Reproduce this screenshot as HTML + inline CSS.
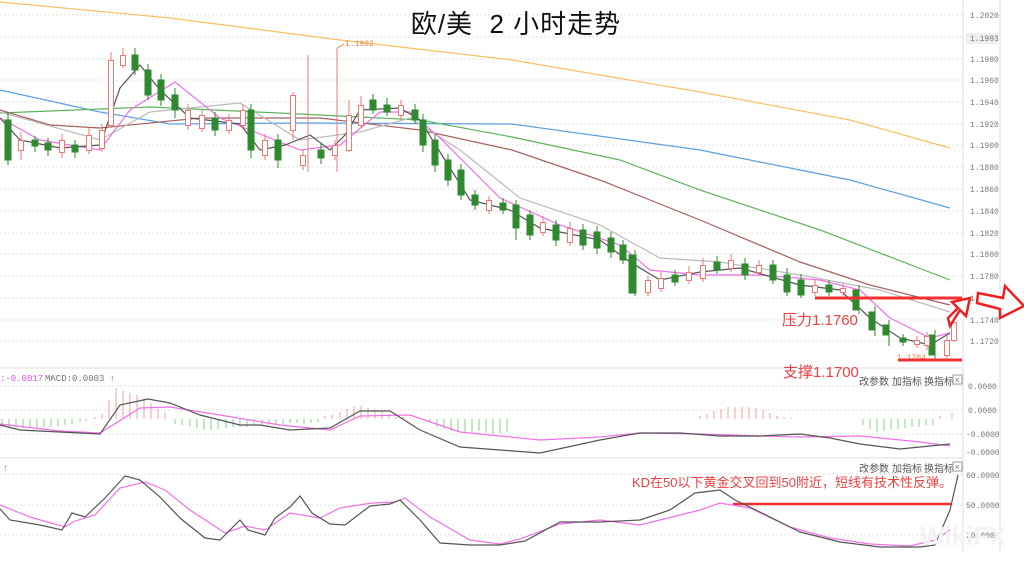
<!DOCTYPE html>
<html><head><meta charset="utf-8"><style>
html,body{margin:0;padding:0;background:#fff;}
body{width:1024px;height:566px;overflow:hidden;position:relative;font-family:"Liberation Sans","Noto Sans CJK SC",sans-serif;}
svg{position:absolute;left:0;top:0}
.ax{font-family:"Liberation Mono",monospace;font-size:8px;fill:#777}
.btn{font-family:"Liberation Sans","Noto Sans CJK SC",sans-serif;font-size:10px;fill:#555}
.g{fill:#2f8a2f;stroke:#2f8a2f;stroke-width:1}
.r{fill:#fff;stroke:#e77;stroke-width:1}
</style></head><body>
<svg width="1024" height="566" viewBox="0 0 1024 566">
<g stroke="#e2e2e2" stroke-dasharray="2,2" stroke-width="1">
<line x1="0" y1="15" x2="962" y2="15"/><line x1="0" y1="37" x2="962" y2="37"/><line x1="0" y1="59" x2="962" y2="59"/><line x1="0" y1="80" x2="962" y2="80"/><line x1="0" y1="102" x2="962" y2="102"/><line x1="0" y1="124" x2="962" y2="124"/><line x1="0" y1="145" x2="962" y2="145"/><line x1="0" y1="167" x2="962" y2="167"/><line x1="0" y1="189" x2="962" y2="189"/><line x1="0" y1="211" x2="962" y2="211"/><line x1="0" y1="233" x2="962" y2="233"/><line x1="0" y1="254" x2="962" y2="254"/><line x1="0" y1="276" x2="962" y2="276"/><line x1="0" y1="298" x2="962" y2="298"/><line x1="0" y1="320" x2="962" y2="320"/><line x1="0" y1="341" x2="962" y2="341"/>
<line x1="0" y1="386" x2="962" y2="386"/><line x1="0" y1="410" x2="962" y2="410"/><line x1="0" y1="434" x2="962" y2="434"/><line x1="0" y1="474" x2="962" y2="474"/><line x1="0" y1="505" x2="962" y2="505"/><line x1="0" y1="535" x2="962" y2="535"/>
</g>
<line x1="0" y1="368" x2="962" y2="368" stroke="#ddd"/>
<line x1="0" y1="458" x2="962" y2="458" stroke="#ddd"/>
<line x1="963" y1="0" x2="963" y2="552" stroke="#ddd"/>
<line x1="1000" y1="0" x2="1000" y2="552" stroke="#ddd"/>
<g class="ax">
<text x="970" y="18">1.2020</text>
<rect x="966" y="33" width="32" height="11" fill="#eee"/><text x="970" y="41">1.1993</text>
<text x="970" y="62">1.1980</text><text x="970" y="83">1.1960</text><text x="970" y="105">1.1940</text><text x="970" y="127">1.1920</text><text x="970" y="148">1.1900</text><text x="970" y="170">1.1880</text><text x="970" y="192">1.1860</text><text x="970" y="214">1.1840</text><text x="970" y="236">1.1820</text><text x="970" y="257">1.1800</text><text x="970" y="279">1.1780</text><text x="970" y="301">1.1760</text><text x="970" y="323">1.1740</text><text x="970" y="344">1.1720</text>
<text x="968" y="389">0.0000</text><text x="968" y="413">0.0000</text><text x="966" y="437">-0.0000</text><text x="966" y="455">-0.0000</text>
<text x="966" y="478">60.0000</text><text x="966" y="508">50.0000</text><text x="966" y="538">20.0000</text>
</g>
<g fill="none" stroke-width="1.2">
<polyline stroke="#f8c060" points="0,2 170,18 340,40 512,60 700,92 850,120 950,148"/>
<polyline stroke="#5aa0e0" points="0,90 100,112 170,124 300,123 512,124 700,150 850,180 950,208"/>
<polyline stroke="#5bb55b" points="0,113 150,107 300,114 420,120 512,137 620,160 700,190 820,230 950,280"/>
<polyline stroke="#a86060" points="0,110 50,125 100,128 200,118 320,118 420,130 512,150 600,180 700,220 800,262 870,285 950,305"/>
<polyline stroke="#bbb" points="0,112 100,140 150,112 240,103 300,140 360,132 410,118 460,150 520,198 600,225 660,258 720,262 800,275 880,290 950,312"/>
<polyline stroke="#f070e8" points="0,118 40,140 100,150 130,110 175,82 220,118 300,150 340,145 380,112 410,112 440,138 500,198 560,225 620,245 650,270 700,275 760,275 820,280 860,290 890,318 930,338 950,333"/>
<polyline stroke="#555" points="0,118 20,140 60,148 100,145 120,88 140,65 160,90 190,118 240,124 260,150 285,145 310,135 330,150 345,135 360,110 400,108 420,120 445,160 470,200 510,210 540,228 600,240 630,262 660,280 700,272 740,268 800,285 840,290 870,318 900,338 930,345 950,333"/>
</g>
<g stroke-width="1">
<g stroke="#2f8a2f">
<line x1="8" y1="112" x2="8" y2="165"/><line x1="35" y1="136" x2="35" y2="152"/><line x1="48" y1="138" x2="48" y2="156"/><line x1="75" y1="140" x2="75" y2="158"/><line x1="135" y1="48" x2="135" y2="75"/><line x1="148" y1="64" x2="148" y2="100"/><line x1="161" y1="74" x2="161" y2="106"/><line x1="175" y1="88" x2="175" y2="118"/><line x1="215" y1="112" x2="215" y2="136"/><line x1="251" y1="104" x2="251" y2="158"/><line x1="278" y1="134" x2="278" y2="168"/><line x1="321" y1="144" x2="321" y2="164"/><line x1="373" y1="94" x2="373" y2="114"/><line x1="387" y1="98" x2="387" y2="116"/><line x1="415" y1="104" x2="415" y2="124"/><line x1="423" y1="114" x2="423" y2="152"/><line x1="435" y1="134" x2="435" y2="172"/><line x1="448" y1="154" x2="448" y2="186"/><line x1="461" y1="164" x2="461" y2="200"/><line x1="475" y1="190" x2="475" y2="210"/><line x1="503" y1="198" x2="503" y2="214"/><line x1="516" y1="200" x2="516" y2="240"/><line x1="530" y1="210" x2="530" y2="240"/><line x1="556" y1="220" x2="556" y2="246"/><line x1="583" y1="224" x2="583" y2="250"/><line x1="597" y1="226" x2="597" y2="254"/><line x1="611" y1="232" x2="611" y2="258"/><line x1="623" y1="240" x2="623" y2="264"/><line x1="635" y1="250" x2="635" y2="296"/><line x1="675" y1="270" x2="675" y2="286"/><line x1="717" y1="256" x2="717" y2="274"/><line x1="745" y1="258" x2="745" y2="280"/><line x1="773" y1="260" x2="773" y2="284"/><line x1="787" y1="268" x2="787" y2="296"/><line x1="801" y1="274" x2="801" y2="298"/><line x1="829" y1="280" x2="829" y2="296"/><line x1="859" y1="285" x2="859" y2="314"/><line x1="875" y1="306" x2="875" y2="336"/><line x1="889" y1="320" x2="889" y2="346"/><line x1="903" y1="334" x2="903" y2="346"/><line x1="935" y1="330" x2="935" y2="360"/>
</g>
<g class="g">
<rect x="5" y="120" width="6" height="40"/><rect x="32" y="140" width="6" height="6"/><rect x="45" y="143" width="6" height="7"/><rect x="72" y="145" width="6" height="7"/><rect x="132" y="55" width="6" height="15"/><rect x="145" y="70" width="6" height="25"/><rect x="158" y="80" width="6" height="20"/><rect x="172" y="95" width="6" height="15"/><rect x="212" y="118" width="6" height="12"/><rect x="248" y="110" width="6" height="40"/><rect x="275" y="140" width="6" height="20"/><rect x="318" y="150" width="6" height="8"/><rect x="370" y="100" width="6" height="10"/><rect x="384" y="105" width="6" height="7"/><rect x="412" y="110" width="6" height="10"/><rect x="420" y="120" width="6" height="25"/><rect x="432" y="140" width="6" height="25"/><rect x="445" y="160" width="6" height="20"/><rect x="458" y="170" width="6" height="25"/><rect x="472" y="195" width="6" height="10"/><rect x="500" y="203" width="6" height="7"/><rect x="513" y="205" width="6" height="23"/><rect x="527" y="215" width="6" height="20"/><rect x="553" y="225" width="6" height="15"/><rect x="580" y="230" width="6" height="15"/><rect x="594" y="232" width="6" height="16"/><rect x="608" y="238" width="6" height="14"/><rect x="620" y="245" width="6" height="15"/><rect x="629" y="255" width="7" height="38"/><rect x="672" y="275" width="6" height="7"/><rect x="714" y="262" width="6" height="8"/><rect x="742" y="264" width="6" height="11"/><rect x="770" y="265" width="6" height="15"/><rect x="784" y="275" width="6" height="17"/><rect x="798" y="280" width="6" height="15"/><rect x="826" y="285" width="6" height="7"/><rect x="853" y="290" width="6" height="20"/><rect x="869" y="312" width="6" height="18"/><rect x="883" y="325" width="6" height="10"/><rect x="900" y="338" width="6" height="4"/><rect x="929" y="335" width="6" height="20"/>
</g>
<g stroke="#e77">
<line x1="21" y1="132" x2="21" y2="160"/><line x1="62" y1="134" x2="62" y2="158"/><line x1="89" y1="128" x2="89" y2="154"/><line x1="102" y1="124" x2="102" y2="152"/><line x1="111" y1="52" x2="111" y2="128"/><line x1="123" y1="48" x2="123" y2="68"/><line x1="188" y1="104" x2="188" y2="130"/><line x1="202" y1="110" x2="202" y2="132"/><line x1="229" y1="114" x2="229" y2="134"/><line x1="243" y1="104" x2="243" y2="128"/><line x1="265" y1="134" x2="265" y2="160"/><line x1="293" y1="92" x2="293" y2="140"/><line x1="303" y1="150" x2="303" y2="170"/><line x1="308" y1="55" x2="308" y2="172"/><line x1="335" y1="140" x2="335" y2="160"/><line x1="337" y1="48" x2="337" y2="172"/><line x1="349" y1="100" x2="349" y2="152"/><line x1="361" y1="96" x2="361" y2="128"/><line x1="401" y1="100" x2="401" y2="120"/><line x1="489" y1="196" x2="489" y2="214"/><line x1="543" y1="216" x2="543" y2="236"/><line x1="570" y1="222" x2="570" y2="246"/><line x1="648" y1="276" x2="648" y2="296"/><line x1="661" y1="272" x2="661" y2="292"/><line x1="689" y1="266" x2="689" y2="284"/><line x1="703" y1="258" x2="703" y2="282"/><line x1="731" y1="254" x2="731" y2="272"/><line x1="759" y1="260" x2="759" y2="276"/><line x1="815" y1="280" x2="815" y2="296"/><line x1="843" y1="284" x2="843" y2="296"/><line x1="917" y1="336" x2="917" y2="348"/><line x1="927" y1="332" x2="927" y2="350"/><line x1="947" y1="336" x2="947" y2="358"/><line x1="954" y1="316" x2="954" y2="342"/>
</g>
<g class="r">
<rect x="18.5" y="140.5" width="5" height="10"/><rect x="59.5" y="140.5" width="5" height="12"/><rect x="86.5" y="135.5" width="5" height="15"/><rect x="99.5" y="130.5" width="5" height="18"/><rect x="108.5" y="60.5" width="5" height="65"/><rect x="120.5" y="55.5" width="5" height="10"/><rect x="185.5" y="110.5" width="5" height="15"/><rect x="199.5" y="115.5" width="5" height="13"/><rect x="226.5" y="120.5" width="5" height="10"/><rect x="240.5" y="110.5" width="5" height="15"/><rect x="262.5" y="140.5" width="5" height="15"/><rect x="290.5" y="95.5" width="5" height="35"/><rect x="300.5" y="155.5" width="5" height="10"/><rect x="332.5" y="145.5" width="5" height="10"/><rect x="346.5" y="115.5" width="5" height="35"/><rect x="358.5" y="105.5" width="5" height="20"/><rect x="398.5" y="105.5" width="5" height="10"/><rect x="486.5" y="200.5" width="5" height="10"/><rect x="540.5" y="222.5" width="5" height="10"/><rect x="567.5" y="228.5" width="5" height="14"/><rect x="645.5" y="280.5" width="5" height="12"/><rect x="658.5" y="278.5" width="5" height="10"/><rect x="686.5" y="272.5" width="5" height="8"/><rect x="700.5" y="265.5" width="5" height="13"/><rect x="728.5" y="260.5" width="5" height="8"/><rect x="756.5" y="265.5" width="5" height="7"/><rect x="812.5" y="285.5" width="5" height="7"/><rect x="840.5" y="288.5" width="5" height="4"/><rect x="914.5" y="340.5" width="5" height="4"/><rect x="924.5" y="336.5" width="5" height="9"/><rect x="944.5" y="340.5" width="5" height="15"/><rect x="951.5" y="322.5" width="5" height="18"/>
</g>
</g>
<line x1="337" y1="48" x2="344" y2="44" stroke="#f08040"/>
<text x="345" y="46" font-size="8" fill="#f08040" font-family="Liberation Mono,monospace">1.1992</text>
<text x="897" y="360" font-size="8" fill="#f08040" font-family="Liberation Mono,monospace">1.1704</text>
<text x="516" y="33" text-anchor="middle" font-size="26" letter-spacing="1" fill="#111" xml:space="preserve">欧/美  2 小时走势</text>
<line x1="815" y1="298" x2="962" y2="298" stroke="#f03030" stroke-width="3"/>
<text x="782" y="325" font-size="15" fill="#ee4040">压力1.1760</text>
<line x1="898" y1="360" x2="962" y2="360" stroke="#f03030" stroke-width="3"/>
<text x="783" y="377" font-size="15" fill="#ee4040">支撑1.1700</text>
<path d="M948 318 L958 308 L952 302 L970 298 L966 316 L960 310 L950 326 Z" fill="#fff" stroke="#f02020" stroke-width="2.5"/>
<path d="M978 293 L1003 298 L1005 286 L1024 306 L1000 318 L1000 309 L977 303 Z" fill="#fff" stroke="#f02020" stroke-width="2.5"/>
<text x="0" y="381" font-size="9" fill="#e050e0" font-family="Liberation Mono,monospace">:-0.0017 ↑</text>
<text x="45" y="381" font-size="9" fill="#777" font-family="Liberation Mono,monospace">MACD:0.0003 ↑</text>
<g class="btn"><text x="859" y="385">改参数</text><text x="892" y="385">加指标</text><text x="924" y="385">换指标</text></g>
<rect x="953" y="375" width="9" height="9" fill="none" stroke="#999"/><text x="954.5" y="383" font-size="9" fill="#777">×</text>
<g stroke="#8c8" stroke-width="1">
<path d="M2 419v8M9 419v9M16 419v9M23 419v9M30 419v8M37 419v9M44 419v8M51 419v8M58 419v7M65 419v6M72 419v5M80 419v3M86 419v2"/>
<path d="M175 419v5M182 419v6M190 419v7M197 419v9M204 419v11M211 419v11M218 419v10M226 419v9M233 419v8M240 419v8M247 419v8M254 419v7M262 419v7M269 419v6M276 419v6M283 419v5M290 419v4M297 419v4M304 419v5M311 419v4M318 419v3"/>
<path d="M430 419v3M437 419v8M444 419v10M451 419v12M458 419v13M465 419v14M472 419v13M479 419v12M486 419v14M493 419v15M500 419v14M507 419v13"/>
<path d="M863 419v6M870 419v10M877 419v13M884 419v12M891 419v10M898 419v10M905 419v9M912 419v8M919 419v8M926 419v6M933 419v6"/>
</g>
<g stroke="#f0a0a0" stroke-width="1">
<path d="M95 419v-2M102 419v-5M109 419v-19M116 419v-31M123 419v-28M130 419v-26M137 419v-24M144 419v-21M151 419v-16M158 419v-10M165 419v-6"/>
<path d="M325 419v-3M332 419v-4M340 419v-7M347 419v-10M354 419v-13M361 419v-13M368 419v-11M375 419v-10M382 419v-7M389 419v-5M396 419v-2M403 419v-2M410 419v-1"/>
<path d="M700 419v-3M707 419v-5M714 419v-8M721 419v-10M728 419v-12M735 419v-12M742 419v-12M749 419v-12M756 419v-11M763 419v-9M770 419v-6M777 419v-3M784 419v-2M791 419v-1M940 419v-3M952 419v-6"/>
</g>
<g fill="none" stroke-width="1.2">
<polyline stroke="#f070e8" points="0,424 60,431 100,433 140,408 170,407 220,415 280,425 330,430 360,416 410,415 460,432 540,440 600,437 640,433 700,434 760,436 800,437 860,436 920,442 950,446"/>
<polyline stroke="#555" points="0,425 20,430 60,432 100,434 120,405 148,399 170,403 200,415 240,425 260,425 290,430 330,428 360,411 390,411 420,430 460,447 500,450 540,453 600,440 640,433 680,433 720,436 760,436 800,434 830,438 860,444 900,449 950,444"/>
</g>
<text x="3" y="471" font-size="10" fill="#e050e0">↑</text>
<g class="btn"><text x="859" y="472">改参数</text><text x="892" y="472">加指标</text><text x="924" y="472">换指标</text></g>
<rect x="953" y="462" width="9" height="9" fill="none" stroke="#999"/><text x="954.5" y="470" font-size="9" fill="#777">×</text>
<text x="632" y="487" font-size="13" fill="#ee4040">KD在50以下黄金交叉回到50附近，短线有技术性反弹。</text>
<line x1="733" y1="504" x2="952" y2="504" stroke="#f03030" stroke-width="2.5"/>
<g fill="none" stroke-width="1.2">
<polyline stroke="#f070e8" points="0,505 30,517 65,527 75,521 95,515 120,488 145,482 165,490 190,510 225,533 245,526 265,530 290,513 320,518 340,508 372,503 395,502 405,498 430,517 470,540 500,544 520,539 560,524 600,520 640,525 700,510 720,503 750,508 790,527 830,538 870,544 910,546 935,540 950,530"/>
<polyline stroke="#555" points="0,509 10,520 40,525 62,530 72,513 85,517 105,498 125,476 140,480 160,497 180,518 205,538 220,540 240,520 248,530 265,535 275,518 290,507 300,496 312,513 330,524 345,525 370,506 390,504 400,500 420,520 440,543 470,545 500,545 525,541 560,522 600,522 640,520 670,510 695,493 720,490 735,500 760,512 800,532 840,542 880,547 920,547 935,545 950,510 958,475"/>
</g>
<text x="920" y="545" font-size="26" fill="#f3f3f3" font-weight="bold">WikiFX</text>
</svg>
</body></html>
